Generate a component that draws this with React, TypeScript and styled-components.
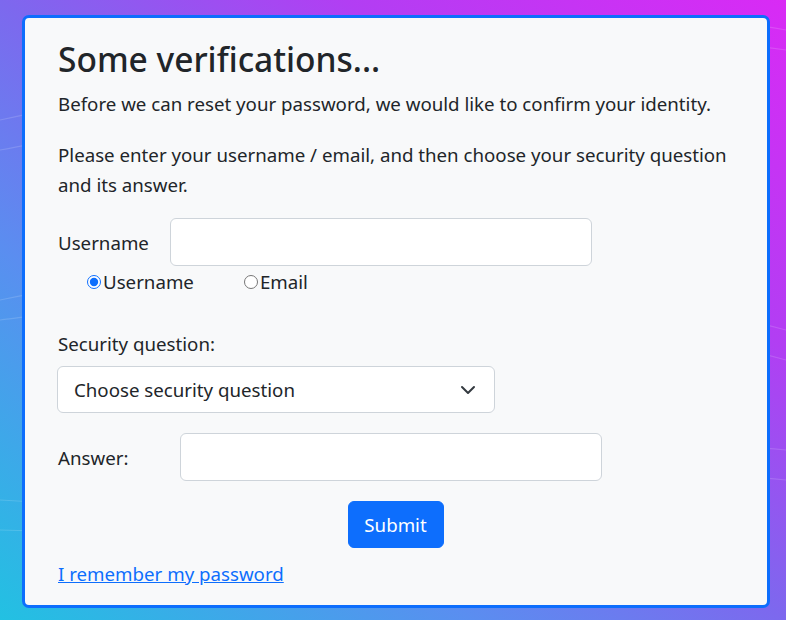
import React from 'react'
import styled, { createGlobalStyle } from 'styled-components'

const GlobalStyle = createGlobalStyle`
  html, body {
    margin: 0;
    padding: 0;
  }
  body {
    font-family: "Noto Sans", "Open Sans", sans-serif;
    color: #212529;
  }
  * {
    box-sizing: border-box;
  }
`

const App = () => {
  const [mode, setMode] = React.useState('username')

  return (
    <Page>
      <GlobalStyle />
      <Swirls viewBox="0 0 786 620" preserveAspectRatio="none">
        <path d="M0 120 C 200 80, 500 -20, 786 30" />
        <path d="M0 150 C 220 110, 520 10, 786 50" />
        <path d="M0 300 C 150 270, 400 230, 786 330" />
        <path d="M0 320 C 160 300, 420 260, 786 360" />
        <path d="M786 450 C 600 430, 300 520, 0 500" />
        <path d="M786 480 C 620 460, 320 540, 0 530" />
      </Swirls>
      <Card>
        <Title>Some verifications...</Title>
        <Text>Before we can reset your password, we would like to confirm your identity.</Text>
        <Text>Please enter your username / email, and then choose your security question and its answer.</Text>

        <FieldRow>
          <Label>Username</Label>
          <Input type="text" $width={422} />
        </FieldRow>
        <RadioRow>
          <RadioLabel>
            <Radio type="radio" name="mode" checked={mode === 'username'} onChange={() => setMode('username')} />
            Username
          </RadioLabel>
          <RadioLabel>
            <Radio type="radio" name="mode" checked={mode === 'email'} onChange={() => setMode('email')} />
            Email
          </RadioLabel>
        </RadioRow>

        <QuestionLabel>Security question:</QuestionLabel>
        <Select>
          <span>Choose security question</span>
          <svg width="16" height="16" viewBox="0 0 16 16" fill="none" stroke="#343a40" strokeWidth="2" strokeLinecap="round" strokeLinejoin="round">
            <path d="M2 5l6 6 6-6" />
          </svg>
        </Select>

        <FieldRow $answer>
          <Label $width={122}>Answer:</Label>
          <Input type="text" $width={422} />
        </FieldRow>

        <ButtonRow>
          <Button>Submit</Button>
        </ButtonRow>

        <Link href="#">I remember my password</Link>
      </Card>
    </Page>
  )
}

export default App

const Page = styled.div`
  width: 786px;
  height: 620px;
  position: relative;
  overflow: hidden;
  padding: 15px 16px 12px 22px;
  background: linear-gradient(to top right, #22c1e2 0%, #5a8ef0 30%, #7d68ee 50%, #b23ef3 72%, #d92af5 100%);
`

const Swirls = styled.svg`
  position: absolute;
  inset: 0;
  width: 100%;
  height: 100%;
  fill: none;
  stroke: rgba(255, 255, 255, 0.15);
  stroke-width: 1.2;
`

const Card = styled.div`
  position: relative;
  width: 748px;
  height: 593px;
  background-color: #f8f9fa;
  border: 3px solid #0d6efd;
  border-radius: 7px;
  padding: 21px 33px 0 32px;
`

const Title = styled.h1`
  margin: 0 0 10px 1px;
  font-size: 33.5px;
  font-weight: 500;
  line-height: 1.2;
`

const Text = styled.p`
  margin: 0 0 21px 1px;
  font-size: 18.7px;
  line-height: 30px;
`

const FieldRow = styled.div<{ $answer?: boolean }>`
  display: flex;
  align-items: center;
  padding-left: 1px;
  margin-top: ${(p) => (p.$answer ? '20px' : '-3px')};
`

const Label = styled.label<{ $width?: number }>`
  width: ${(p) => p.$width || 112}px;
  font-size: 18.7px;
`

const Input = styled.input<{ $width: number }>`
  width: ${(p) => p.$width}px;
  height: 48px;
  border: 1px solid #ced4da;
  border-radius: 6px;
  background: #fff;
  font-size: 18px;
  padding: 6px 12px;
`

const RadioRow = styled.div`
  display: flex;
  gap: 50px;
  padding-left: 30px;
  margin-top: 4px;
`

const RadioLabel = styled.label`
  display: flex;
  align-items: center;
  font-size: 18.7px;
  line-height: 24px;
`

const Radio = styled.input`
  margin: 0 2px 0 0;
  width: 14px;
  height: 14px;
  accent-color: #0d6efd;
`

const QuestionLabel = styled.div`
  margin: 38px 0 0 1px;
  font-size: 18.7px;
  line-height: 24px;
`

const Select = styled.div`
  margin-top: 10px;
  width: 438px;
  height: 47px;
  display: flex;
  align-items: center;
  justify-content: space-between;
  padding: 0 18px 0 16px;
  background: #fff;
  border: 1px solid #ced4da;
  border-radius: 6px;
  font-size: 18.7px;
`

const ButtonRow = styled.div`
  display: flex;
  justify-content: center;
  margin-top: 20px;
`

const Button = styled.button`
  width: 96px;
  height: 47px;
  background-color: #0d6efd;
  border: 1px solid #0d6efd;
  border-radius: 6px;
  color: #fff;
  font-family: inherit;
  font-size: 18.7px;
`

const Link = styled.a`
  display: inline-block;
  margin: 13px 0 0 1px;
  font-size: 18.7px;
  color: #0d6efd;
  text-decoration: underline;
`
